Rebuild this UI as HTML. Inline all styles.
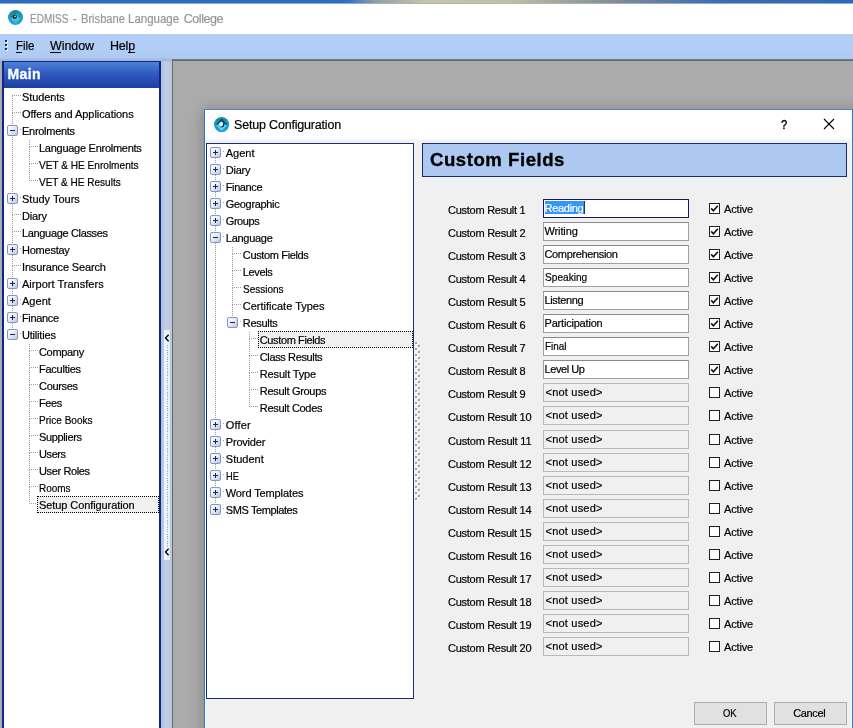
<!DOCTYPE html>
<html><head><meta charset="utf-8"><title>EDMISS - Brisbane Language College</title><style>html,body{margin:0;padding:0;background:#ababab;}
body{width:853px;height:728px;overflow:hidden;position:relative;font-family:"Liberation Sans", sans-serif;}
#r{position:absolute;left:0;top:0;width:853px;height:728px;overflow:hidden;}
#r div,#r span,#r svg{position:absolute;}
#t{left:0;top:0;width:853px;height:728px;will-change:transform;}
#r span{white-space:pre;line-height:normal;color:#000;font-size:11px;-webkit-text-stroke:0.2px currentColor;}
</style></head><body><div id="r"><div style="left:0px;top:0px;width:853px;height:4px;background:#fff"></div><div style="left:0px;top:0px;width:853px;height:3px;background:linear-gradient(90deg,#2a6cc2 0%,#2c6ec2 40.5%,#8fa0a8 44%,#c9c5a6 50%,#bfc0a4 60%,#98a29a 67%,#74889c 74%,#3a6eb6 84%,#2c68bc 100%)"></div><div style="left:0px;top:3px;width:853px;height:1px;background:linear-gradient(90deg,#264f8e 0%,#264f8e 40.5%,#5c6468 45%,#6e6c5c 60%,#565e66 72%,#2c4f86 84%,#2c4f86 100%);opacity:.5"></div><div style="left:0px;top:4px;width:853px;height:30px;background:#fff"></div><div style="left:0px;top:34px;width:853px;height:26px;background:linear-gradient(180deg,#b4cef6 0%,#b0ccf5 70%,#aec8f0 100%)"></div><div style="left:0px;top:60px;width:853px;height:668px;background:#a3b8da"></div><div style="left:0px;top:58px;width:172px;height:3px;background:linear-gradient(180deg,#aac2ea,#9fb2d2)"></div><div style="left:0px;top:61px;width:2px;height:667px;background:#a9adb4"></div><svg style="position:absolute;left:7.0px;top:8.8px" width="17.0" height="17.0" viewBox="-8.5 -8.5 17.0 17.0"><defs><linearGradient id="g1" x1="0" y1="0" x2="0" y2="1"><stop offset="0" stop-color="#12889f"/><stop offset="0.5" stop-color="#189ebd"/><stop offset="1" stop-color="#22a6dc"/></linearGradient></defs><circle cx="0" cy="0" r="7.5" fill="url(#g1)"/><path d="M-4.6 0.6 L0 4.8 L4.6 0.6" fill="none" stroke="#5fd8f4" stroke-width="1.1" opacity="0.75"/><path d="M-4.6 -0.2 L-0.4 -4.4 L3.8 -0.2" fill="none" stroke="#0c5f78" stroke-width="1" opacity="0.8"/><circle cx="-0.2" cy="-0.2" r="3.3" fill="#8fe2f2" opacity="0.55"/><circle cx="-0.8" cy="-0.8" r="2.3" fill="#1c2434"/><circle cx="-0.5" cy="-1.0" r="1.0" fill="#d9a8c0"/></svg><div style="left:5px;top:40px;width:2px;height:2px;background:#1a2a5a"></div><div style="left:6px;top:41px;width:2px;height:2px;background:#fff"></div><div style="left:5px;top:40px;width:2px;height:2px;background:#1a2a5a"></div><div style="left:5px;top:44px;width:2px;height:2px;background:#1a2a5a"></div><div style="left:6px;top:45px;width:2px;height:2px;background:#fff"></div><div style="left:5px;top:44px;width:2px;height:2px;background:#1a2a5a"></div><div style="left:5px;top:48px;width:2px;height:2px;background:#1a2a5a"></div><div style="left:6px;top:49px;width:2px;height:2px;background:#fff"></div><div style="left:5px;top:48px;width:2px;height:2px;background:#1a2a5a"></div><div style="left:16px;top:52px;width:6px;height:1px;background:#000"></div><div style="left:50px;top:52px;width:11px;height:1px;background:#000"></div><div style="left:128px;top:52px;width:7px;height:1px;background:#000"></div><div style="left:2px;top:61px;width:159px;height:667px;background:#0f2684"></div><div style="left:4px;top:62px;width:155px;height:26px;background:linear-gradient(180deg,#5080da 0%,#2e5ac2 45%,#1c3ea0 100%)"></div><div style="left:4px;top:88px;width:155px;height:640px;background:#fff"></div><div style="left:161px;top:61px;width:11px;height:667px;background:linear-gradient(90deg,#b2c0da 0%,#bfcde4 45%,#bac8de 100%)"></div><div style="left:164px;top:330px;width:6px;height:230px;background:linear-gradient(90deg,#f4f7fd,#dfe8f6)"></div><div style="left:167px;top:345px;width:1px;height:201px;background:repeating-linear-gradient(180deg,#86aade 0 1px,transparent 1px 2.33px)"></div><div style="left:168px;top:346px;width:1px;height:201px;background:repeating-linear-gradient(180deg,#ffffff 0 1px,transparent 1px 2.33px)"></div><svg style="position:absolute;left:163.3px;top:333.2px" width="8" height="10" viewBox="-4 -5 8 10"><path d="M1.6 -3.2 L-1.5 0 L1.6 3.2" fill="none" stroke="#000" stroke-width="1.35"/></svg><svg style="position:absolute;left:163.3px;top:547.4px" width="8" height="10" viewBox="-4 -5 8 10"><path d="M1.6 -3.2 L-1.5 0 L1.6 3.2" fill="none" stroke="#000" stroke-width="1.35"/></svg><div style="left:172px;top:60px;width:681px;height:668px;background:#ababab"></div><div style="left:172px;top:59px;width:681px;height:2px;background:linear-gradient(180deg,#7a8494,#5c626c)"></div><div style="left:172px;top:61px;width:1px;height:667px;background:#656b6b"></div><div style="left:12px;top:95px;width:9px;height:1px;background:repeating-linear-gradient(90deg,#9c9c9c 0 1px,transparent 1px 2px);background-position:0px 0;background-size:2px 1px;background-repeat:repeat-x"></div><div style="left:12px;top:112px;width:9px;height:1px;background:repeating-linear-gradient(90deg,#9c9c9c 0 1px,transparent 1px 2px);background-position:0px 0;background-size:2px 1px;background-repeat:repeat-x"></div><div style="left:12px;top:95px;width:1px;height:17px;background:repeating-linear-gradient(180deg,#9c9c9c 0 1px,transparent 1px 2px);background-position:0 1px;background-size:1px 2px;background-repeat:repeat-y"></div><div style="left:19px;top:129px;width:2px;height:1px;background:repeating-linear-gradient(90deg,#9c9c9c 0 1px,transparent 1px 2px);background-position:1px 0;background-size:2px 1px;background-repeat:repeat-x"></div><div style="left:12px;top:112px;width:1px;height:13px;background:repeating-linear-gradient(180deg,#9c9c9c 0 1px,transparent 1px 2px);background-position:0 1px;background-size:1px 2px;background-repeat:repeat-y"></div><div style="left:29px;top:146px;width:9px;height:1px;background:repeating-linear-gradient(90deg,#9c9c9c 0 1px,transparent 1px 2px);background-position:0px 0;background-size:2px 1px;background-repeat:repeat-x"></div><div style="left:29px;top:139px;width:1px;height:7px;background:repeating-linear-gradient(180deg,#9c9c9c 0 1px,transparent 1px 2px);background-position:0 1px;background-size:1px 2px;background-repeat:repeat-y"></div><div style="left:29px;top:163px;width:9px;height:1px;background:repeating-linear-gradient(90deg,#9c9c9c 0 1px,transparent 1px 2px);background-position:0px 0;background-size:2px 1px;background-repeat:repeat-x"></div><div style="left:29px;top:146px;width:1px;height:17px;background:repeating-linear-gradient(180deg,#9c9c9c 0 1px,transparent 1px 2px);background-position:0 1px;background-size:1px 2px;background-repeat:repeat-y"></div><div style="left:29px;top:180px;width:9px;height:1px;background:repeating-linear-gradient(90deg,#9c9c9c 0 1px,transparent 1px 2px);background-position:0px 0;background-size:2px 1px;background-repeat:repeat-x"></div><div style="left:29px;top:163px;width:1px;height:17px;background:repeating-linear-gradient(180deg,#9c9c9c 0 1px,transparent 1px 2px);background-position:0 1px;background-size:1px 2px;background-repeat:repeat-y"></div><div style="left:19px;top:197px;width:2px;height:1px;background:repeating-linear-gradient(90deg,#9c9c9c 0 1px,transparent 1px 2px);background-position:1px 0;background-size:2px 1px;background-repeat:repeat-x"></div><div style="left:12px;top:136px;width:1px;height:57px;background:repeating-linear-gradient(180deg,#9c9c9c 0 1px,transparent 1px 2px);background-position:0 1px;background-size:1px 2px;background-repeat:repeat-y"></div><div style="left:12px;top:214px;width:9px;height:1px;background:repeating-linear-gradient(90deg,#9c9c9c 0 1px,transparent 1px 2px);background-position:0px 0;background-size:2px 1px;background-repeat:repeat-x"></div><div style="left:12px;top:204px;width:1px;height:10px;background:repeating-linear-gradient(180deg,#9c9c9c 0 1px,transparent 1px 2px);background-position:0 0px;background-size:1px 2px;background-repeat:repeat-y"></div><div style="left:12px;top:231px;width:9px;height:1px;background:repeating-linear-gradient(90deg,#9c9c9c 0 1px,transparent 1px 2px);background-position:0px 0;background-size:2px 1px;background-repeat:repeat-x"></div><div style="left:12px;top:214px;width:1px;height:17px;background:repeating-linear-gradient(180deg,#9c9c9c 0 1px,transparent 1px 2px);background-position:0 1px;background-size:1px 2px;background-repeat:repeat-y"></div><div style="left:19px;top:248px;width:2px;height:1px;background:repeating-linear-gradient(90deg,#9c9c9c 0 1px,transparent 1px 2px);background-position:1px 0;background-size:2px 1px;background-repeat:repeat-x"></div><div style="left:12px;top:231px;width:1px;height:13px;background:repeating-linear-gradient(180deg,#9c9c9c 0 1px,transparent 1px 2px);background-position:0 1px;background-size:1px 2px;background-repeat:repeat-y"></div><div style="left:12px;top:265px;width:9px;height:1px;background:repeating-linear-gradient(90deg,#9c9c9c 0 1px,transparent 1px 2px);background-position:0px 0;background-size:2px 1px;background-repeat:repeat-x"></div><div style="left:12px;top:255px;width:1px;height:10px;background:repeating-linear-gradient(180deg,#9c9c9c 0 1px,transparent 1px 2px);background-position:0 0px;background-size:1px 2px;background-repeat:repeat-y"></div><div style="left:19px;top:282px;width:2px;height:1px;background:repeating-linear-gradient(90deg,#9c9c9c 0 1px,transparent 1px 2px);background-position:1px 0;background-size:2px 1px;background-repeat:repeat-x"></div><div style="left:12px;top:265px;width:1px;height:13px;background:repeating-linear-gradient(180deg,#9c9c9c 0 1px,transparent 1px 2px);background-position:0 1px;background-size:1px 2px;background-repeat:repeat-y"></div><div style="left:19px;top:299px;width:2px;height:1px;background:repeating-linear-gradient(90deg,#9c9c9c 0 1px,transparent 1px 2px);background-position:1px 0;background-size:2px 1px;background-repeat:repeat-x"></div><div style="left:12px;top:289px;width:1px;height:6px;background:repeating-linear-gradient(180deg,#9c9c9c 0 1px,transparent 1px 2px);background-position:0 0px;background-size:1px 2px;background-repeat:repeat-y"></div><div style="left:19px;top:316px;width:2px;height:1px;background:repeating-linear-gradient(90deg,#9c9c9c 0 1px,transparent 1px 2px);background-position:1px 0;background-size:2px 1px;background-repeat:repeat-x"></div><div style="left:12px;top:306px;width:1px;height:6px;background:repeating-linear-gradient(180deg,#9c9c9c 0 1px,transparent 1px 2px);background-position:0 0px;background-size:1px 2px;background-repeat:repeat-y"></div><div style="left:19px;top:333px;width:2px;height:1px;background:repeating-linear-gradient(90deg,#9c9c9c 0 1px,transparent 1px 2px);background-position:1px 0;background-size:2px 1px;background-repeat:repeat-x"></div><div style="left:12px;top:323px;width:1px;height:6px;background:repeating-linear-gradient(180deg,#9c9c9c 0 1px,transparent 1px 2px);background-position:0 0px;background-size:1px 2px;background-repeat:repeat-y"></div><div style="left:29px;top:350px;width:9px;height:1px;background:repeating-linear-gradient(90deg,#9c9c9c 0 1px,transparent 1px 2px);background-position:0px 0;background-size:2px 1px;background-repeat:repeat-x"></div><div style="left:29px;top:343px;width:1px;height:7px;background:repeating-linear-gradient(180deg,#9c9c9c 0 1px,transparent 1px 2px);background-position:0 1px;background-size:1px 2px;background-repeat:repeat-y"></div><div style="left:29px;top:367px;width:9px;height:1px;background:repeating-linear-gradient(90deg,#9c9c9c 0 1px,transparent 1px 2px);background-position:0px 0;background-size:2px 1px;background-repeat:repeat-x"></div><div style="left:29px;top:350px;width:1px;height:17px;background:repeating-linear-gradient(180deg,#9c9c9c 0 1px,transparent 1px 2px);background-position:0 1px;background-size:1px 2px;background-repeat:repeat-y"></div><div style="left:29px;top:384px;width:9px;height:1px;background:repeating-linear-gradient(90deg,#9c9c9c 0 1px,transparent 1px 2px);background-position:0px 0;background-size:2px 1px;background-repeat:repeat-x"></div><div style="left:29px;top:367px;width:1px;height:17px;background:repeating-linear-gradient(180deg,#9c9c9c 0 1px,transparent 1px 2px);background-position:0 1px;background-size:1px 2px;background-repeat:repeat-y"></div><div style="left:29px;top:401px;width:9px;height:1px;background:repeating-linear-gradient(90deg,#9c9c9c 0 1px,transparent 1px 2px);background-position:0px 0;background-size:2px 1px;background-repeat:repeat-x"></div><div style="left:29px;top:384px;width:1px;height:17px;background:repeating-linear-gradient(180deg,#9c9c9c 0 1px,transparent 1px 2px);background-position:0 1px;background-size:1px 2px;background-repeat:repeat-y"></div><div style="left:29px;top:418px;width:9px;height:1px;background:repeating-linear-gradient(90deg,#9c9c9c 0 1px,transparent 1px 2px);background-position:0px 0;background-size:2px 1px;background-repeat:repeat-x"></div><div style="left:29px;top:401px;width:1px;height:17px;background:repeating-linear-gradient(180deg,#9c9c9c 0 1px,transparent 1px 2px);background-position:0 1px;background-size:1px 2px;background-repeat:repeat-y"></div><div style="left:29px;top:435px;width:9px;height:1px;background:repeating-linear-gradient(90deg,#9c9c9c 0 1px,transparent 1px 2px);background-position:0px 0;background-size:2px 1px;background-repeat:repeat-x"></div><div style="left:29px;top:418px;width:1px;height:17px;background:repeating-linear-gradient(180deg,#9c9c9c 0 1px,transparent 1px 2px);background-position:0 1px;background-size:1px 2px;background-repeat:repeat-y"></div><div style="left:29px;top:452px;width:9px;height:1px;background:repeating-linear-gradient(90deg,#9c9c9c 0 1px,transparent 1px 2px);background-position:0px 0;background-size:2px 1px;background-repeat:repeat-x"></div><div style="left:29px;top:435px;width:1px;height:17px;background:repeating-linear-gradient(180deg,#9c9c9c 0 1px,transparent 1px 2px);background-position:0 1px;background-size:1px 2px;background-repeat:repeat-y"></div><div style="left:29px;top:469px;width:9px;height:1px;background:repeating-linear-gradient(90deg,#9c9c9c 0 1px,transparent 1px 2px);background-position:0px 0;background-size:2px 1px;background-repeat:repeat-x"></div><div style="left:29px;top:452px;width:1px;height:17px;background:repeating-linear-gradient(180deg,#9c9c9c 0 1px,transparent 1px 2px);background-position:0 1px;background-size:1px 2px;background-repeat:repeat-y"></div><div style="left:29px;top:486px;width:9px;height:1px;background:repeating-linear-gradient(90deg,#9c9c9c 0 1px,transparent 1px 2px);background-position:0px 0;background-size:2px 1px;background-repeat:repeat-x"></div><div style="left:29px;top:469px;width:1px;height:17px;background:repeating-linear-gradient(180deg,#9c9c9c 0 1px,transparent 1px 2px);background-position:0 1px;background-size:1px 2px;background-repeat:repeat-y"></div><div style="left:29px;top:503px;width:9px;height:1px;background:repeating-linear-gradient(90deg,#9c9c9c 0 1px,transparent 1px 2px);background-position:0px 0;background-size:2px 1px;background-repeat:repeat-x"></div><div style="left:37px;top:496px;width:122px;height:17px;background:#f0f0f0;border:1px dotted #000;box-sizing:border-box"></div><div style="left:29px;top:486px;width:1px;height:17px;background:repeating-linear-gradient(180deg,#9c9c9c 0 1px,transparent 1px 2px);background-position:0 1px;background-size:1px 2px;background-repeat:repeat-y"></div><div style="left:7px;top:125px;width:9px;height:9px;border:1px solid #8896b8;border-radius:2px;background:linear-gradient(135deg,#ffffff 0%,#eaf0fb 40%,#b9c9e8 100%)"></div><div style="left:10px;top:130px;width:5px;height:1px;background:#18245e"></div><div style="left:7px;top:193px;width:9px;height:9px;border:1px solid #8896b8;border-radius:2px;background:linear-gradient(135deg,#ffffff 0%,#eaf0fb 40%,#b9c9e8 100%)"></div><div style="left:10px;top:198px;width:5px;height:1px;background:#18245e"></div><div style="left:12px;top:196px;width:1px;height:5px;background:#18245e"></div><div style="left:7px;top:244px;width:9px;height:9px;border:1px solid #8896b8;border-radius:2px;background:linear-gradient(135deg,#ffffff 0%,#eaf0fb 40%,#b9c9e8 100%)"></div><div style="left:10px;top:249px;width:5px;height:1px;background:#18245e"></div><div style="left:12px;top:247px;width:1px;height:5px;background:#18245e"></div><div style="left:7px;top:278px;width:9px;height:9px;border:1px solid #8896b8;border-radius:2px;background:linear-gradient(135deg,#ffffff 0%,#eaf0fb 40%,#b9c9e8 100%)"></div><div style="left:10px;top:283px;width:5px;height:1px;background:#18245e"></div><div style="left:12px;top:281px;width:1px;height:5px;background:#18245e"></div><div style="left:7px;top:295px;width:9px;height:9px;border:1px solid #8896b8;border-radius:2px;background:linear-gradient(135deg,#ffffff 0%,#eaf0fb 40%,#b9c9e8 100%)"></div><div style="left:10px;top:300px;width:5px;height:1px;background:#18245e"></div><div style="left:12px;top:298px;width:1px;height:5px;background:#18245e"></div><div style="left:7px;top:312px;width:9px;height:9px;border:1px solid #8896b8;border-radius:2px;background:linear-gradient(135deg,#ffffff 0%,#eaf0fb 40%,#b9c9e8 100%)"></div><div style="left:10px;top:317px;width:5px;height:1px;background:#18245e"></div><div style="left:12px;top:315px;width:1px;height:5px;background:#18245e"></div><div style="left:7px;top:329px;width:9px;height:9px;border:1px solid #8896b8;border-radius:2px;background:linear-gradient(135deg,#ffffff 0%,#eaf0fb 40%,#b9c9e8 100%)"></div><div style="left:10px;top:334px;width:5px;height:1px;background:#18245e"></div><div style="left:204px;top:109px;width:660px;height:640px;background:#9a9a9a;box-shadow:0 1px 13px 1px rgba(0,0,0,0.22)"></div><div style="left:204px;top:109px;width:649px;height:630px;background:#4a86c6"></div><div style="left:204px;top:110px;width:649px;height:630px;background:#2b78d0"></div><div style="left:205px;top:110px;width:647px;height:630px;background:#f0f0f0;border-left:1px solid #fafcff;border-right:1px solid #fafcff;box-sizing:border-box"></div><div style="left:205px;top:110px;width:647px;height:28px;background:#fff"></div><div style="left:205px;top:138px;width:647px;height:3px;background:linear-gradient(180deg,#fff,#f0f0f0)"></div><svg style="position:absolute;left:212.70000000000002px;top:115.7px" width="17.2" height="17.2" viewBox="-8.6 -8.6 17.2 17.2"><defs><linearGradient id="g2" x1="0" y1="0" x2="0" y2="1"><stop offset="0" stop-color="#12889f"/><stop offset="0.5" stop-color="#189ebd"/><stop offset="1" stop-color="#22a6dc"/></linearGradient></defs><circle cx="0" cy="0" r="7.6" fill="url(#g2)"/><path d="M-4.9 0 L0 5 L4.9 0" fill="none" stroke="#74e4fa" stroke-width="1.3"/><path d="M-5 0 L0 -5 L5 0" fill="none" stroke="#142850" stroke-width="1.1"/><circle cx="-0.4" cy="-0.3" r="2.1" fill="#f4fbff"/><path d="M1.5 -1.6 A2.3 2.3 0 0 1 0.2 2.2" fill="none" stroke="#10203c" stroke-width="1.1"/></svg><svg style="position:absolute;left:823px;top:118px" width="12" height="12" viewBox="0 0 12 12"><path d="M1 1 L11 11 M11 1 L1 11" stroke="#000" stroke-width="1.1" fill="none"/></svg><div style="left:206px;top:143px;width:208px;height:556px;background:#fff;border:1px solid #1c2c74;box-sizing:border-box"></div><div style="left:222px;top:151px;width:2px;height:1px;background:repeating-linear-gradient(90deg,#9c9c9c 0 1px,transparent 1px 2px);background-position:1px 0;background-size:2px 1px;background-repeat:repeat-x"></div><div style="left:222px;top:168px;width:2px;height:1px;background:repeating-linear-gradient(90deg,#9c9c9c 0 1px,transparent 1px 2px);background-position:1px 0;background-size:2px 1px;background-repeat:repeat-x"></div><div style="left:215px;top:158px;width:1px;height:6px;background:repeating-linear-gradient(180deg,#9c9c9c 0 1px,transparent 1px 2px);background-position:0 0px;background-size:1px 2px;background-repeat:repeat-y"></div><div style="left:222px;top:185px;width:2px;height:1px;background:repeating-linear-gradient(90deg,#9c9c9c 0 1px,transparent 1px 2px);background-position:1px 0;background-size:2px 1px;background-repeat:repeat-x"></div><div style="left:215px;top:175px;width:1px;height:6px;background:repeating-linear-gradient(180deg,#9c9c9c 0 1px,transparent 1px 2px);background-position:0 0px;background-size:1px 2px;background-repeat:repeat-y"></div><div style="left:222px;top:202px;width:2px;height:1px;background:repeating-linear-gradient(90deg,#9c9c9c 0 1px,transparent 1px 2px);background-position:1px 0;background-size:2px 1px;background-repeat:repeat-x"></div><div style="left:215px;top:192px;width:1px;height:6px;background:repeating-linear-gradient(180deg,#9c9c9c 0 1px,transparent 1px 2px);background-position:0 0px;background-size:1px 2px;background-repeat:repeat-y"></div><div style="left:222px;top:219px;width:2px;height:1px;background:repeating-linear-gradient(90deg,#9c9c9c 0 1px,transparent 1px 2px);background-position:1px 0;background-size:2px 1px;background-repeat:repeat-x"></div><div style="left:215px;top:209px;width:1px;height:6px;background:repeating-linear-gradient(180deg,#9c9c9c 0 1px,transparent 1px 2px);background-position:0 0px;background-size:1px 2px;background-repeat:repeat-y"></div><div style="left:222px;top:236px;width:2px;height:1px;background:repeating-linear-gradient(90deg,#9c9c9c 0 1px,transparent 1px 2px);background-position:1px 0;background-size:2px 1px;background-repeat:repeat-x"></div><div style="left:215px;top:226px;width:1px;height:6px;background:repeating-linear-gradient(180deg,#9c9c9c 0 1px,transparent 1px 2px);background-position:0 0px;background-size:1px 2px;background-repeat:repeat-y"></div><div style="left:232px;top:253px;width:9px;height:1px;background:repeating-linear-gradient(90deg,#9c9c9c 0 1px,transparent 1px 2px);background-position:0px 0;background-size:2px 1px;background-repeat:repeat-x"></div><div style="left:232px;top:246px;width:1px;height:7px;background:repeating-linear-gradient(180deg,#9c9c9c 0 1px,transparent 1px 2px);background-position:0 1px;background-size:1px 2px;background-repeat:repeat-y"></div><div style="left:232px;top:270px;width:9px;height:1px;background:repeating-linear-gradient(90deg,#9c9c9c 0 1px,transparent 1px 2px);background-position:0px 0;background-size:2px 1px;background-repeat:repeat-x"></div><div style="left:232px;top:253px;width:1px;height:17px;background:repeating-linear-gradient(180deg,#9c9c9c 0 1px,transparent 1px 2px);background-position:0 1px;background-size:1px 2px;background-repeat:repeat-y"></div><div style="left:232px;top:287px;width:9px;height:1px;background:repeating-linear-gradient(90deg,#9c9c9c 0 1px,transparent 1px 2px);background-position:0px 0;background-size:2px 1px;background-repeat:repeat-x"></div><div style="left:232px;top:270px;width:1px;height:17px;background:repeating-linear-gradient(180deg,#9c9c9c 0 1px,transparent 1px 2px);background-position:0 1px;background-size:1px 2px;background-repeat:repeat-y"></div><div style="left:232px;top:304px;width:9px;height:1px;background:repeating-linear-gradient(90deg,#9c9c9c 0 1px,transparent 1px 2px);background-position:0px 0;background-size:2px 1px;background-repeat:repeat-x"></div><div style="left:232px;top:287px;width:1px;height:17px;background:repeating-linear-gradient(180deg,#9c9c9c 0 1px,transparent 1px 2px);background-position:0 1px;background-size:1px 2px;background-repeat:repeat-y"></div><div style="left:239px;top:321px;width:2px;height:1px;background:repeating-linear-gradient(90deg,#9c9c9c 0 1px,transparent 1px 2px);background-position:1px 0;background-size:2px 1px;background-repeat:repeat-x"></div><div style="left:232px;top:304px;width:1px;height:13px;background:repeating-linear-gradient(180deg,#9c9c9c 0 1px,transparent 1px 2px);background-position:0 1px;background-size:1px 2px;background-repeat:repeat-y"></div><div style="left:249px;top:338px;width:9px;height:1px;background:repeating-linear-gradient(90deg,#9c9c9c 0 1px,transparent 1px 2px);background-position:0px 0;background-size:2px 1px;background-repeat:repeat-x"></div><div style="left:257.8px;top:331px;width:155.2px;height:17px;background:#f0f0f0;border:1px dotted #000;box-sizing:border-box"></div><div style="left:249px;top:331px;width:1px;height:7px;background:repeating-linear-gradient(180deg,#9c9c9c 0 1px,transparent 1px 2px);background-position:0 1px;background-size:1px 2px;background-repeat:repeat-y"></div><div style="left:249px;top:355px;width:9px;height:1px;background:repeating-linear-gradient(90deg,#9c9c9c 0 1px,transparent 1px 2px);background-position:0px 0;background-size:2px 1px;background-repeat:repeat-x"></div><div style="left:249px;top:338px;width:1px;height:17px;background:repeating-linear-gradient(180deg,#9c9c9c 0 1px,transparent 1px 2px);background-position:0 1px;background-size:1px 2px;background-repeat:repeat-y"></div><div style="left:249px;top:372px;width:9px;height:1px;background:repeating-linear-gradient(90deg,#9c9c9c 0 1px,transparent 1px 2px);background-position:0px 0;background-size:2px 1px;background-repeat:repeat-x"></div><div style="left:249px;top:355px;width:1px;height:17px;background:repeating-linear-gradient(180deg,#9c9c9c 0 1px,transparent 1px 2px);background-position:0 1px;background-size:1px 2px;background-repeat:repeat-y"></div><div style="left:249px;top:389px;width:9px;height:1px;background:repeating-linear-gradient(90deg,#9c9c9c 0 1px,transparent 1px 2px);background-position:0px 0;background-size:2px 1px;background-repeat:repeat-x"></div><div style="left:249px;top:372px;width:1px;height:17px;background:repeating-linear-gradient(180deg,#9c9c9c 0 1px,transparent 1px 2px);background-position:0 1px;background-size:1px 2px;background-repeat:repeat-y"></div><div style="left:249px;top:406px;width:9px;height:1px;background:repeating-linear-gradient(90deg,#9c9c9c 0 1px,transparent 1px 2px);background-position:0px 0;background-size:2px 1px;background-repeat:repeat-x"></div><div style="left:249px;top:389px;width:1px;height:17px;background:repeating-linear-gradient(180deg,#9c9c9c 0 1px,transparent 1px 2px);background-position:0 1px;background-size:1px 2px;background-repeat:repeat-y"></div><div style="left:222px;top:423px;width:2px;height:1px;background:repeating-linear-gradient(90deg,#9c9c9c 0 1px,transparent 1px 2px);background-position:1px 0;background-size:2px 1px;background-repeat:repeat-x"></div><div style="left:215px;top:243px;width:1px;height:176px;background:repeating-linear-gradient(180deg,#9c9c9c 0 1px,transparent 1px 2px);background-position:0 0px;background-size:1px 2px;background-repeat:repeat-y"></div><div style="left:222px;top:440px;width:2px;height:1px;background:repeating-linear-gradient(90deg,#9c9c9c 0 1px,transparent 1px 2px);background-position:1px 0;background-size:2px 1px;background-repeat:repeat-x"></div><div style="left:215px;top:430px;width:1px;height:6px;background:repeating-linear-gradient(180deg,#9c9c9c 0 1px,transparent 1px 2px);background-position:0 0px;background-size:1px 2px;background-repeat:repeat-y"></div><div style="left:222px;top:457px;width:2px;height:1px;background:repeating-linear-gradient(90deg,#9c9c9c 0 1px,transparent 1px 2px);background-position:1px 0;background-size:2px 1px;background-repeat:repeat-x"></div><div style="left:215px;top:447px;width:1px;height:6px;background:repeating-linear-gradient(180deg,#9c9c9c 0 1px,transparent 1px 2px);background-position:0 0px;background-size:1px 2px;background-repeat:repeat-y"></div><div style="left:222px;top:474px;width:2px;height:1px;background:repeating-linear-gradient(90deg,#9c9c9c 0 1px,transparent 1px 2px);background-position:1px 0;background-size:2px 1px;background-repeat:repeat-x"></div><div style="left:215px;top:464px;width:1px;height:6px;background:repeating-linear-gradient(180deg,#9c9c9c 0 1px,transparent 1px 2px);background-position:0 0px;background-size:1px 2px;background-repeat:repeat-y"></div><div style="left:222px;top:491px;width:2px;height:1px;background:repeating-linear-gradient(90deg,#9c9c9c 0 1px,transparent 1px 2px);background-position:1px 0;background-size:2px 1px;background-repeat:repeat-x"></div><div style="left:215px;top:481px;width:1px;height:6px;background:repeating-linear-gradient(180deg,#9c9c9c 0 1px,transparent 1px 2px);background-position:0 0px;background-size:1px 2px;background-repeat:repeat-y"></div><div style="left:222px;top:508px;width:2px;height:1px;background:repeating-linear-gradient(90deg,#9c9c9c 0 1px,transparent 1px 2px);background-position:1px 0;background-size:2px 1px;background-repeat:repeat-x"></div><div style="left:215px;top:498px;width:1px;height:6px;background:repeating-linear-gradient(180deg,#9c9c9c 0 1px,transparent 1px 2px);background-position:0 0px;background-size:1px 2px;background-repeat:repeat-y"></div><div style="left:210px;top:147px;width:9px;height:9px;border:1px solid #8896b8;border-radius:2px;background:linear-gradient(135deg,#ffffff 0%,#eaf0fb 40%,#b9c9e8 100%)"></div><div style="left:213px;top:152px;width:5px;height:1px;background:#18245e"></div><div style="left:215px;top:150px;width:1px;height:5px;background:#18245e"></div><div style="left:210px;top:164px;width:9px;height:9px;border:1px solid #8896b8;border-radius:2px;background:linear-gradient(135deg,#ffffff 0%,#eaf0fb 40%,#b9c9e8 100%)"></div><div style="left:213px;top:169px;width:5px;height:1px;background:#18245e"></div><div style="left:215px;top:167px;width:1px;height:5px;background:#18245e"></div><div style="left:210px;top:181px;width:9px;height:9px;border:1px solid #8896b8;border-radius:2px;background:linear-gradient(135deg,#ffffff 0%,#eaf0fb 40%,#b9c9e8 100%)"></div><div style="left:213px;top:186px;width:5px;height:1px;background:#18245e"></div><div style="left:215px;top:184px;width:1px;height:5px;background:#18245e"></div><div style="left:210px;top:198px;width:9px;height:9px;border:1px solid #8896b8;border-radius:2px;background:linear-gradient(135deg,#ffffff 0%,#eaf0fb 40%,#b9c9e8 100%)"></div><div style="left:213px;top:203px;width:5px;height:1px;background:#18245e"></div><div style="left:215px;top:201px;width:1px;height:5px;background:#18245e"></div><div style="left:210px;top:215px;width:9px;height:9px;border:1px solid #8896b8;border-radius:2px;background:linear-gradient(135deg,#ffffff 0%,#eaf0fb 40%,#b9c9e8 100%)"></div><div style="left:213px;top:220px;width:5px;height:1px;background:#18245e"></div><div style="left:215px;top:218px;width:1px;height:5px;background:#18245e"></div><div style="left:210px;top:232px;width:9px;height:9px;border:1px solid #8896b8;border-radius:2px;background:linear-gradient(135deg,#ffffff 0%,#eaf0fb 40%,#b9c9e8 100%)"></div><div style="left:213px;top:237px;width:5px;height:1px;background:#18245e"></div><div style="left:227px;top:317px;width:9px;height:9px;border:1px solid #8896b8;border-radius:2px;background:linear-gradient(135deg,#ffffff 0%,#eaf0fb 40%,#b9c9e8 100%)"></div><div style="left:230px;top:322px;width:5px;height:1px;background:#18245e"></div><div style="left:210px;top:419px;width:9px;height:9px;border:1px solid #8896b8;border-radius:2px;background:linear-gradient(135deg,#ffffff 0%,#eaf0fb 40%,#b9c9e8 100%)"></div><div style="left:213px;top:424px;width:5px;height:1px;background:#18245e"></div><div style="left:215px;top:422px;width:1px;height:5px;background:#18245e"></div><div style="left:210px;top:436px;width:9px;height:9px;border:1px solid #8896b8;border-radius:2px;background:linear-gradient(135deg,#ffffff 0%,#eaf0fb 40%,#b9c9e8 100%)"></div><div style="left:213px;top:441px;width:5px;height:1px;background:#18245e"></div><div style="left:215px;top:439px;width:1px;height:5px;background:#18245e"></div><div style="left:210px;top:453px;width:9px;height:9px;border:1px solid #8896b8;border-radius:2px;background:linear-gradient(135deg,#ffffff 0%,#eaf0fb 40%,#b9c9e8 100%)"></div><div style="left:213px;top:458px;width:5px;height:1px;background:#18245e"></div><div style="left:215px;top:456px;width:1px;height:5px;background:#18245e"></div><div style="left:210px;top:470px;width:9px;height:9px;border:1px solid #8896b8;border-radius:2px;background:linear-gradient(135deg,#ffffff 0%,#eaf0fb 40%,#b9c9e8 100%)"></div><div style="left:213px;top:475px;width:5px;height:1px;background:#18245e"></div><div style="left:215px;top:473px;width:1px;height:5px;background:#18245e"></div><div style="left:210px;top:487px;width:9px;height:9px;border:1px solid #8896b8;border-radius:2px;background:linear-gradient(135deg,#ffffff 0%,#eaf0fb 40%,#b9c9e8 100%)"></div><div style="left:213px;top:492px;width:5px;height:1px;background:#18245e"></div><div style="left:215px;top:490px;width:1px;height:5px;background:#18245e"></div><div style="left:210px;top:504px;width:9px;height:9px;border:1px solid #8896b8;border-radius:2px;background:linear-gradient(135deg,#ffffff 0%,#eaf0fb 40%,#b9c9e8 100%)"></div><div style="left:213px;top:509px;width:5px;height:1px;background:#18245e"></div><div style="left:215px;top:507px;width:1px;height:5px;background:#18245e"></div><div style="left:416px;top:343px;width:2px;height:2px;background:#fafafa"></div><div style="left:415px;top:342px;width:2px;height:2px;background:#a4a4a4"></div><div style="left:416px;top:349px;width:2px;height:2px;background:#fafafa"></div><div style="left:415px;top:348px;width:2px;height:2px;background:#a4a4a4"></div><div style="left:416px;top:355px;width:2px;height:2px;background:#fafafa"></div><div style="left:415px;top:354px;width:2px;height:2px;background:#a4a4a4"></div><div style="left:416px;top:361px;width:2px;height:2px;background:#fafafa"></div><div style="left:415px;top:360px;width:2px;height:2px;background:#a4a4a4"></div><div style="left:416px;top:367px;width:2px;height:2px;background:#fafafa"></div><div style="left:415px;top:366px;width:2px;height:2px;background:#a4a4a4"></div><div style="left:416px;top:373px;width:2px;height:2px;background:#fafafa"></div><div style="left:415px;top:372px;width:2px;height:2px;background:#a4a4a4"></div><div style="left:416px;top:379px;width:2px;height:2px;background:#fafafa"></div><div style="left:415px;top:378px;width:2px;height:2px;background:#a4a4a4"></div><div style="left:416px;top:385px;width:2px;height:2px;background:#fafafa"></div><div style="left:415px;top:384px;width:2px;height:2px;background:#a4a4a4"></div><div style="left:416px;top:391px;width:2px;height:2px;background:#fafafa"></div><div style="left:415px;top:390px;width:2px;height:2px;background:#a4a4a4"></div><div style="left:416px;top:397px;width:2px;height:2px;background:#fafafa"></div><div style="left:415px;top:396px;width:2px;height:2px;background:#a4a4a4"></div><div style="left:416px;top:403px;width:2px;height:2px;background:#fafafa"></div><div style="left:415px;top:402px;width:2px;height:2px;background:#a4a4a4"></div><div style="left:416px;top:409px;width:2px;height:2px;background:#fafafa"></div><div style="left:415px;top:408px;width:2px;height:2px;background:#a4a4a4"></div><div style="left:416px;top:415px;width:2px;height:2px;background:#fafafa"></div><div style="left:415px;top:414px;width:2px;height:2px;background:#a4a4a4"></div><div style="left:416px;top:421px;width:2px;height:2px;background:#fafafa"></div><div style="left:415px;top:420px;width:2px;height:2px;background:#a4a4a4"></div><div style="left:416px;top:427px;width:2px;height:2px;background:#fafafa"></div><div style="left:415px;top:426px;width:2px;height:2px;background:#a4a4a4"></div><div style="left:416px;top:433px;width:2px;height:2px;background:#fafafa"></div><div style="left:415px;top:432px;width:2px;height:2px;background:#a4a4a4"></div><div style="left:416px;top:439px;width:2px;height:2px;background:#fafafa"></div><div style="left:415px;top:438px;width:2px;height:2px;background:#a4a4a4"></div><div style="left:416px;top:445px;width:2px;height:2px;background:#fafafa"></div><div style="left:415px;top:444px;width:2px;height:2px;background:#a4a4a4"></div><div style="left:416px;top:451px;width:2px;height:2px;background:#fafafa"></div><div style="left:415px;top:450px;width:2px;height:2px;background:#a4a4a4"></div><div style="left:416px;top:457px;width:2px;height:2px;background:#fafafa"></div><div style="left:415px;top:456px;width:2px;height:2px;background:#a4a4a4"></div><div style="left:416px;top:463px;width:2px;height:2px;background:#fafafa"></div><div style="left:415px;top:462px;width:2px;height:2px;background:#a4a4a4"></div><div style="left:416px;top:469px;width:2px;height:2px;background:#fafafa"></div><div style="left:415px;top:468px;width:2px;height:2px;background:#a4a4a4"></div><div style="left:416px;top:475px;width:2px;height:2px;background:#fafafa"></div><div style="left:415px;top:474px;width:2px;height:2px;background:#a4a4a4"></div><div style="left:416px;top:481px;width:2px;height:2px;background:#fafafa"></div><div style="left:415px;top:480px;width:2px;height:2px;background:#a4a4a4"></div><div style="left:416px;top:487px;width:2px;height:2px;background:#fafafa"></div><div style="left:415px;top:486px;width:2px;height:2px;background:#a4a4a4"></div><div style="left:416px;top:493px;width:2px;height:2px;background:#fafafa"></div><div style="left:415px;top:492px;width:2px;height:2px;background:#a4a4a4"></div><div style="left:416px;top:499px;width:2px;height:2px;background:#fafafa"></div><div style="left:415px;top:498px;width:2px;height:2px;background:#a4a4a4"></div><div style="left:419px;top:346px;width:2px;height:2px;background:#fafafa"></div><div style="left:418px;top:345px;width:2px;height:2px;background:#a4a4a4"></div><div style="left:419px;top:352px;width:2px;height:2px;background:#fafafa"></div><div style="left:418px;top:351px;width:2px;height:2px;background:#a4a4a4"></div><div style="left:419px;top:358px;width:2px;height:2px;background:#fafafa"></div><div style="left:418px;top:357px;width:2px;height:2px;background:#a4a4a4"></div><div style="left:419px;top:364px;width:2px;height:2px;background:#fafafa"></div><div style="left:418px;top:363px;width:2px;height:2px;background:#a4a4a4"></div><div style="left:419px;top:370px;width:2px;height:2px;background:#fafafa"></div><div style="left:418px;top:369px;width:2px;height:2px;background:#a4a4a4"></div><div style="left:419px;top:376px;width:2px;height:2px;background:#fafafa"></div><div style="left:418px;top:375px;width:2px;height:2px;background:#a4a4a4"></div><div style="left:419px;top:382px;width:2px;height:2px;background:#fafafa"></div><div style="left:418px;top:381px;width:2px;height:2px;background:#a4a4a4"></div><div style="left:419px;top:388px;width:2px;height:2px;background:#fafafa"></div><div style="left:418px;top:387px;width:2px;height:2px;background:#a4a4a4"></div><div style="left:419px;top:394px;width:2px;height:2px;background:#fafafa"></div><div style="left:418px;top:393px;width:2px;height:2px;background:#a4a4a4"></div><div style="left:419px;top:400px;width:2px;height:2px;background:#fafafa"></div><div style="left:418px;top:399px;width:2px;height:2px;background:#a4a4a4"></div><div style="left:419px;top:406px;width:2px;height:2px;background:#fafafa"></div><div style="left:418px;top:405px;width:2px;height:2px;background:#a4a4a4"></div><div style="left:419px;top:412px;width:2px;height:2px;background:#fafafa"></div><div style="left:418px;top:411px;width:2px;height:2px;background:#a4a4a4"></div><div style="left:419px;top:418px;width:2px;height:2px;background:#fafafa"></div><div style="left:418px;top:417px;width:2px;height:2px;background:#a4a4a4"></div><div style="left:419px;top:424px;width:2px;height:2px;background:#fafafa"></div><div style="left:418px;top:423px;width:2px;height:2px;background:#a4a4a4"></div><div style="left:419px;top:430px;width:2px;height:2px;background:#fafafa"></div><div style="left:418px;top:429px;width:2px;height:2px;background:#a4a4a4"></div><div style="left:419px;top:436px;width:2px;height:2px;background:#fafafa"></div><div style="left:418px;top:435px;width:2px;height:2px;background:#a4a4a4"></div><div style="left:419px;top:442px;width:2px;height:2px;background:#fafafa"></div><div style="left:418px;top:441px;width:2px;height:2px;background:#a4a4a4"></div><div style="left:419px;top:448px;width:2px;height:2px;background:#fafafa"></div><div style="left:418px;top:447px;width:2px;height:2px;background:#a4a4a4"></div><div style="left:419px;top:454px;width:2px;height:2px;background:#fafafa"></div><div style="left:418px;top:453px;width:2px;height:2px;background:#a4a4a4"></div><div style="left:419px;top:460px;width:2px;height:2px;background:#fafafa"></div><div style="left:418px;top:459px;width:2px;height:2px;background:#a4a4a4"></div><div style="left:419px;top:466px;width:2px;height:2px;background:#fafafa"></div><div style="left:418px;top:465px;width:2px;height:2px;background:#a4a4a4"></div><div style="left:419px;top:472px;width:2px;height:2px;background:#fafafa"></div><div style="left:418px;top:471px;width:2px;height:2px;background:#a4a4a4"></div><div style="left:419px;top:478px;width:2px;height:2px;background:#fafafa"></div><div style="left:418px;top:477px;width:2px;height:2px;background:#a4a4a4"></div><div style="left:419px;top:484px;width:2px;height:2px;background:#fafafa"></div><div style="left:418px;top:483px;width:2px;height:2px;background:#a4a4a4"></div><div style="left:419px;top:490px;width:2px;height:2px;background:#fafafa"></div><div style="left:418px;top:489px;width:2px;height:2px;background:#a4a4a4"></div><div style="left:419px;top:496px;width:2px;height:2px;background:#fafafa"></div><div style="left:418px;top:495px;width:2px;height:2px;background:#a4a4a4"></div><div style="left:422px;top:143px;width:425px;height:34px;background:#aec9f1;border:1px solid #1c2c74;box-sizing:border-box"></div><div style="left:543px;top:199px;width:146px;height:19px;background:#fff;border:1px solid #16165e;box-sizing:border-box"></div><div style="left:545px;top:201px;width:39px;height:13px;background:#3496fa"></div><div style="left:584px;top:201px;width:1px;height:13px;background:#333"></div><div style="left:709px;top:203px;width:11px;height:11px;background:#fff;border:1px solid #222;box-sizing:border-box"></div><svg style="position:absolute;left:709px;top:203px" width="11" height="11" viewBox="0 0 11 11"><path d="M2.2 5.4 L4.4 7.8 L8.8 2.8" fill="none" stroke="#111" stroke-width="1.6"/></svg><div style="left:543px;top:222px;width:146px;height:19px;background:#fff;border:1px solid #a0a0a0;border-top-color:#8a8a8a;box-sizing:border-box"></div><div style="left:709px;top:226px;width:11px;height:11px;background:#fff;border:1px solid #222;box-sizing:border-box"></div><svg style="position:absolute;left:709px;top:226px" width="11" height="11" viewBox="0 0 11 11"><path d="M2.2 5.4 L4.4 7.8 L8.8 2.8" fill="none" stroke="#111" stroke-width="1.6"/></svg><div style="left:543px;top:245px;width:146px;height:19px;background:#fff;border:1px solid #a0a0a0;border-top-color:#8a8a8a;box-sizing:border-box"></div><div style="left:709px;top:249px;width:11px;height:11px;background:#fff;border:1px solid #222;box-sizing:border-box"></div><svg style="position:absolute;left:709px;top:249px" width="11" height="11" viewBox="0 0 11 11"><path d="M2.2 5.4 L4.4 7.8 L8.8 2.8" fill="none" stroke="#111" stroke-width="1.6"/></svg><div style="left:543px;top:268px;width:146px;height:19px;background:#fff;border:1px solid #a0a0a0;border-top-color:#8a8a8a;box-sizing:border-box"></div><div style="left:709px;top:272px;width:11px;height:11px;background:#fff;border:1px solid #222;box-sizing:border-box"></div><svg style="position:absolute;left:709px;top:272px" width="11" height="11" viewBox="0 0 11 11"><path d="M2.2 5.4 L4.4 7.8 L8.8 2.8" fill="none" stroke="#111" stroke-width="1.6"/></svg><div style="left:543px;top:291px;width:146px;height:19px;background:#fff;border:1px solid #a0a0a0;border-top-color:#8a8a8a;box-sizing:border-box"></div><div style="left:709px;top:295px;width:11px;height:11px;background:#fff;border:1px solid #222;box-sizing:border-box"></div><svg style="position:absolute;left:709px;top:295px" width="11" height="11" viewBox="0 0 11 11"><path d="M2.2 5.4 L4.4 7.8 L8.8 2.8" fill="none" stroke="#111" stroke-width="1.6"/></svg><div style="left:543px;top:314px;width:146px;height:19px;background:#fff;border:1px solid #a0a0a0;border-top-color:#8a8a8a;box-sizing:border-box"></div><div style="left:709px;top:318px;width:11px;height:11px;background:#fff;border:1px solid #222;box-sizing:border-box"></div><svg style="position:absolute;left:709px;top:318px" width="11" height="11" viewBox="0 0 11 11"><path d="M2.2 5.4 L4.4 7.8 L8.8 2.8" fill="none" stroke="#111" stroke-width="1.6"/></svg><div style="left:543px;top:337px;width:146px;height:19px;background:#fff;border:1px solid #a0a0a0;border-top-color:#8a8a8a;box-sizing:border-box"></div><div style="left:709px;top:341px;width:11px;height:11px;background:#fff;border:1px solid #222;box-sizing:border-box"></div><svg style="position:absolute;left:709px;top:341px" width="11" height="11" viewBox="0 0 11 11"><path d="M2.2 5.4 L4.4 7.8 L8.8 2.8" fill="none" stroke="#111" stroke-width="1.6"/></svg><div style="left:543px;top:360px;width:146px;height:19px;background:#fff;border:1px solid #a0a0a0;border-top-color:#8a8a8a;box-sizing:border-box"></div><div style="left:709px;top:364px;width:11px;height:11px;background:#fff;border:1px solid #222;box-sizing:border-box"></div><svg style="position:absolute;left:709px;top:364px" width="11" height="11" viewBox="0 0 11 11"><path d="M2.2 5.4 L4.4 7.8 L8.8 2.8" fill="none" stroke="#111" stroke-width="1.6"/></svg><div style="left:543px;top:383px;width:146px;height:19px;background:#f0f0f0;border:1px solid #b8b8b8;box-sizing:border-box"></div><div style="left:709px;top:387px;width:11px;height:11px;background:#fff;border:1px solid #222;box-sizing:border-box"></div><div style="left:543px;top:406px;width:146px;height:19px;background:#f0f0f0;border:1px solid #b8b8b8;box-sizing:border-box"></div><div style="left:709px;top:410px;width:11px;height:11px;background:#fff;border:1px solid #222;box-sizing:border-box"></div><div style="left:543px;top:430px;width:146px;height:19px;background:#f0f0f0;border:1px solid #b8b8b8;box-sizing:border-box"></div><div style="left:709px;top:434px;width:11px;height:11px;background:#fff;border:1px solid #222;box-sizing:border-box"></div><div style="left:543px;top:453px;width:146px;height:19px;background:#f0f0f0;border:1px solid #b8b8b8;box-sizing:border-box"></div><div style="left:709px;top:457px;width:11px;height:11px;background:#fff;border:1px solid #222;box-sizing:border-box"></div><div style="left:543px;top:476px;width:146px;height:19px;background:#f0f0f0;border:1px solid #b8b8b8;box-sizing:border-box"></div><div style="left:709px;top:480px;width:11px;height:11px;background:#fff;border:1px solid #222;box-sizing:border-box"></div><div style="left:543px;top:499px;width:146px;height:19px;background:#f0f0f0;border:1px solid #b8b8b8;box-sizing:border-box"></div><div style="left:709px;top:503px;width:11px;height:11px;background:#fff;border:1px solid #222;box-sizing:border-box"></div><div style="left:543px;top:522px;width:146px;height:19px;background:#f0f0f0;border:1px solid #b8b8b8;box-sizing:border-box"></div><div style="left:709px;top:526px;width:11px;height:11px;background:#fff;border:1px solid #222;box-sizing:border-box"></div><div style="left:543px;top:545px;width:146px;height:19px;background:#f0f0f0;border:1px solid #b8b8b8;box-sizing:border-box"></div><div style="left:709px;top:549px;width:11px;height:11px;background:#fff;border:1px solid #222;box-sizing:border-box"></div><div style="left:543px;top:568px;width:146px;height:19px;background:#f0f0f0;border:1px solid #b8b8b8;box-sizing:border-box"></div><div style="left:709px;top:572px;width:11px;height:11px;background:#fff;border:1px solid #222;box-sizing:border-box"></div><div style="left:543px;top:591px;width:146px;height:19px;background:#f0f0f0;border:1px solid #b8b8b8;box-sizing:border-box"></div><div style="left:709px;top:595px;width:11px;height:11px;background:#fff;border:1px solid #222;box-sizing:border-box"></div><div style="left:543px;top:614px;width:146px;height:19px;background:#f0f0f0;border:1px solid #b8b8b8;box-sizing:border-box"></div><div style="left:709px;top:618px;width:11px;height:11px;background:#fff;border:1px solid #222;box-sizing:border-box"></div><div style="left:543px;top:637px;width:146px;height:19px;background:#f0f0f0;border:1px solid #b8b8b8;box-sizing:border-box"></div><div style="left:709px;top:641px;width:11px;height:11px;background:#fff;border:1px solid #222;box-sizing:border-box"></div><div style="left:694px;top:702px;width:73px;height:23px;background:#e1e1e1;border:1px solid #adadad;box-sizing:border-box"></div><div style="left:774px;top:702px;width:73px;height:23px;background:#e1e1e1;border:1px solid #adadad;box-sizing:border-box"></div><div id="t"><span style="left:30px;top:11.69px;font-size:12.5px;color:#969696;transform:scaleX(0.8031);transform-origin:0 0;">EDMISS</span><span style="left:72.9px;top:11.69px;font-size:12.5px;color:#969696;transform:scaleX(0.8629);transform-origin:0 0;">-</span><span style="left:80.6px;top:11.69px;font-size:12.5px;color:#969696;transform:scaleX(0.8897);transform-origin:0 0;">Brisbane</span><span style="left:128.3px;top:11.69px;font-size:12.5px;color:#969696;transform:scaleX(0.9187);transform-origin:0 0;">Language</span><span style="left:183.8px;top:11.69px;font-size:12.5px;color:#969696;letter-spacing:-0.456px;">College</span><span style="left:16px;top:39.19px;font-size:12.5px;transform:scaleX(0.9178);transform-origin:0 0;">File</span><span style="left:50px;top:39.19px;font-size:12.5px;letter-spacing:-0.078px;">Window</span><span style="left:110px;top:39.19px;font-size:12.5px;letter-spacing:-0.180px;">Help</span><span style="left:7.5px;top:65.83px;font-size:14px;font-weight:bold;color:#fff;letter-spacing:0.427px;-webkit-text-stroke:0.3px #fff;">Main</span><span style="left:22px;top:90.84px;font-size:11px;letter-spacing:-0.090px;">Students</span><span style="left:22px;top:107.84px;font-size:11px;letter-spacing:-0.057px;">Offers and Applications</span><span style="left:22px;top:124.85px;font-size:11px;letter-spacing:-0.284px;">Enrolments</span><span style="left:39px;top:141.84px;font-size:11px;letter-spacing:-0.265px;">Language Enrolments</span><span style="left:39px;top:158.84px;font-size:11px;transform:scaleX(0.9169);transform-origin:0 0;">VET &amp; HE Enrolments</span><span style="left:39px;top:175.84px;font-size:11px;transform:scaleX(0.9111);transform-origin:0 0;">VET &amp; HE Results</span><span style="left:22px;top:192.84px;font-size:11px;letter-spacing:-0.008px;">Study Tours</span><span style="left:22px;top:209.84px;font-size:11px;letter-spacing:-0.194px;">Diary</span><span style="left:22px;top:226.84px;font-size:11px;letter-spacing:-0.339px;">Language Classes</span><span style="left:22px;top:243.84px;font-size:11px;letter-spacing:-0.241px;">Homestay</span><span style="left:22px;top:260.85px;font-size:11px;letter-spacing:-0.157px;">Insurance Search</span><span style="left:22px;top:277.85px;font-size:11px;letter-spacing:0.023px;">Airport Transfers</span><span style="left:22px;top:294.85px;font-size:11px;letter-spacing:0.030px;">Agent</span><span style="left:22px;top:311.85px;font-size:11px;letter-spacing:-0.349px;">Finance</span><span style="left:22px;top:328.85px;font-size:11px;letter-spacing:-0.195px;">Utilities</span><span style="left:39px;top:345.85px;font-size:11px;letter-spacing:-0.325px;">Company</span><span style="left:39px;top:362.85px;font-size:11px;letter-spacing:-0.248px;">Faculties</span><span style="left:39px;top:379.85px;font-size:11px;letter-spacing:-0.310px;">Courses</span><span style="left:39px;top:396.85px;font-size:11px;letter-spacing:-0.442px;">Fees</span><span style="left:39px;top:413.85px;font-size:11px;transform:scaleX(0.9131);transform-origin:0 0;">Price Books</span><span style="left:39px;top:430.85px;font-size:11px;letter-spacing:-0.362px;">Suppliers</span><span style="left:39px;top:447.85px;font-size:11px;letter-spacing:-0.407px;">Users</span><span style="left:39px;top:464.85px;font-size:11px;letter-spacing:-0.381px;">User Roles</span><span style="left:39px;top:481.85px;font-size:11px;transform:scaleX(0.9069);transform-origin:0 0;">Rooms</span><span style="left:39px;top:498.85px;font-size:11px;letter-spacing:-0.086px;">Setup Configuration</span><span style="left:234px;top:117.69px;font-size:12.5px;letter-spacing:-0.184px;">Setup Configuration</span><span style="left:781.3px;top:116.69px;font-size:13.6px;transform:scaleX(0.8198);transform-origin:0 0;-webkit-text-stroke:0.45px #000;">?</span><span style="left:225.8px;top:146.84px;font-size:11px;letter-spacing:-0.010px;">Agent</span><span style="left:225.8px;top:163.84px;font-size:11px;letter-spacing:-0.254px;">Diary</span><span style="left:225.8px;top:180.84px;font-size:11px;letter-spacing:-0.406px;">Finance</span><span style="left:225.8px;top:197.84px;font-size:11px;letter-spacing:-0.327px;">Geographic</span><span style="left:225.8px;top:214.84px;font-size:11px;letter-spacing:-0.446px;">Groups</span><span style="left:225.8px;top:231.84px;font-size:11px;letter-spacing:-0.282px;">Language</span><span style="left:242.8px;top:248.84px;font-size:11px;letter-spacing:-0.354px;">Custom Fields</span><span style="left:242.8px;top:265.85px;font-size:11px;letter-spacing:-0.349px;">Levels</span><span style="left:242.8px;top:282.85px;font-size:11px;transform:scaleX(0.9095);transform-origin:0 0;">Sessions</span><span style="left:242.8px;top:299.85px;font-size:11px;letter-spacing:-0.002px;">Certificate Types</span><span style="left:242.8px;top:316.85px;font-size:11px;letter-spacing:-0.298px;">Results</span><span style="left:259.8px;top:333.85px;font-size:11px;letter-spacing:-0.377px;">Custom Fields</span><span style="left:259.8px;top:350.85px;font-size:11px;letter-spacing:-0.373px;">Class Results</span><span style="left:259.8px;top:367.85px;font-size:11px;letter-spacing:-0.154px;">Result Type</span><span style="left:259.8px;top:384.85px;font-size:11px;letter-spacing:-0.301px;">Result Groups</span><span style="left:259.8px;top:401.85px;font-size:11px;letter-spacing:-0.304px;">Result Codes</span><span style="left:225.8px;top:418.85px;font-size:11px;letter-spacing:0.127px;">Offer</span><span style="left:225.8px;top:435.85px;font-size:11px;letter-spacing:-0.209px;">Provider</span><span style="left:225.8px;top:452.85px;font-size:11px;letter-spacing:-0.003px;">Student</span><span style="left:225.8px;top:469.85px;font-size:11px;transform:scaleX(0.8376);transform-origin:0 0;">HE</span><span style="left:225.8px;top:486.85px;font-size:11px;letter-spacing:-0.113px;">Word Templates</span><span style="left:225.8px;top:503.84px;font-size:11px;letter-spacing:-0.402px;">SMS Templates</span><span style="left:430px;top:149.47px;font-size:18.6px;font-weight:bold;letter-spacing:0.530px;-webkit-text-stroke:0.35px #000;">Custom Fields</span><span style="left:448px;top:204.34px;font-size:11px;letter-spacing:-0.261px;">Custom Result 1</span><span style="left:544.6px;top:202.24px;font-size:11px;color:#fff;letter-spacing:-0.312px;">Reading</span><span style="left:724px;top:202.64px;font-size:11px;letter-spacing:-0.161px;">Active</span><span style="left:448px;top:227.34px;font-size:11px;letter-spacing:-0.261px;">Custom Result 2</span><span style="left:544.5px;top:225.24px;font-size:11px;letter-spacing:-0.119px;">Writing</span><span style="left:724px;top:225.64px;font-size:11px;letter-spacing:-0.161px;">Active</span><span style="left:448px;top:250.34px;font-size:11px;letter-spacing:-0.261px;">Custom Result 3</span><span style="left:544.5px;top:248.24px;font-size:11px;letter-spacing:-0.350px;">Comprehension</span><span style="left:724px;top:248.65px;font-size:11px;letter-spacing:-0.161px;">Active</span><span style="left:448px;top:273.35px;font-size:11px;letter-spacing:-0.261px;">Custom Result 4</span><span style="left:544.5px;top:271.25px;font-size:11px;transform:scaleX(0.9199);transform-origin:0 0;">Speaking</span><span style="left:724px;top:271.65px;font-size:11px;letter-spacing:-0.161px;">Active</span><span style="left:448px;top:296.35px;font-size:11px;letter-spacing:-0.261px;">Custom Result 5</span><span style="left:544.5px;top:294.25px;font-size:11px;letter-spacing:-0.349px;">Listenng</span><span style="left:724px;top:294.65px;font-size:11px;letter-spacing:-0.161px;">Active</span><span style="left:448px;top:319.35px;font-size:11px;letter-spacing:-0.261px;">Custom Result 6</span><span style="left:544.5px;top:317.25px;font-size:11px;letter-spacing:-0.196px;">Participation</span><span style="left:724px;top:317.65px;font-size:11px;letter-spacing:-0.161px;">Active</span><span style="left:448px;top:342.35px;font-size:11px;letter-spacing:-0.261px;">Custom Result 7</span><span style="left:544.5px;top:340.25px;font-size:11px;transform:scaleX(0.9017);transform-origin:0 0;">Final</span><span style="left:724px;top:340.65px;font-size:11px;letter-spacing:-0.161px;">Active</span><span style="left:448px;top:365.35px;font-size:11px;letter-spacing:-0.261px;">Custom Result 8</span><span style="left:544.5px;top:363.25px;font-size:11px;letter-spacing:-0.428px;">Level Up</span><span style="left:724px;top:363.65px;font-size:11px;letter-spacing:-0.161px;">Active</span><span style="left:448px;top:388.35px;font-size:11px;letter-spacing:-0.261px;">Custom Result 9</span><span style="left:545.6px;top:386.25px;font-size:11px;letter-spacing:0.194px;">&lt;not used&gt;</span><span style="left:724px;top:386.65px;font-size:11px;letter-spacing:-0.161px;">Active</span><span style="left:448px;top:411.35px;font-size:11px;letter-spacing:-0.259px;">Custom Result 10</span><span style="left:545.6px;top:409.25px;font-size:11px;letter-spacing:0.194px;">&lt;not used&gt;</span><span style="left:724px;top:409.65px;font-size:11px;letter-spacing:-0.161px;">Active</span><span style="left:448px;top:435.35px;font-size:11px;letter-spacing:-0.207px;">Custom Result 11</span><span style="left:545.6px;top:433.25px;font-size:11px;letter-spacing:0.194px;">&lt;not used&gt;</span><span style="left:724px;top:433.65px;font-size:11px;letter-spacing:-0.161px;">Active</span><span style="left:448px;top:458.35px;font-size:11px;letter-spacing:-0.259px;">Custom Result 12</span><span style="left:545.6px;top:456.25px;font-size:11px;letter-spacing:0.194px;">&lt;not used&gt;</span><span style="left:724px;top:456.65px;font-size:11px;letter-spacing:-0.161px;">Active</span><span style="left:448px;top:481.35px;font-size:11px;letter-spacing:-0.259px;">Custom Result 13</span><span style="left:545.6px;top:479.25px;font-size:11px;letter-spacing:0.194px;">&lt;not used&gt;</span><span style="left:724px;top:479.65px;font-size:11px;letter-spacing:-0.161px;">Active</span><span style="left:448px;top:504.34px;font-size:11px;letter-spacing:-0.259px;">Custom Result 14</span><span style="left:545.6px;top:502.25px;font-size:11px;letter-spacing:0.194px;">&lt;not used&gt;</span><span style="left:724px;top:502.65px;font-size:11px;letter-spacing:-0.161px;">Active</span><span style="left:448px;top:527.34px;font-size:11px;letter-spacing:-0.259px;">Custom Result 15</span><span style="left:545.6px;top:525.25px;font-size:11px;letter-spacing:0.194px;">&lt;not used&gt;</span><span style="left:724px;top:525.64px;font-size:11px;letter-spacing:-0.161px;">Active</span><span style="left:448px;top:550.34px;font-size:11px;letter-spacing:-0.259px;">Custom Result 16</span><span style="left:545.6px;top:548.25px;font-size:11px;letter-spacing:0.194px;">&lt;not used&gt;</span><span style="left:724px;top:548.64px;font-size:11px;letter-spacing:-0.161px;">Active</span><span style="left:448px;top:573.34px;font-size:11px;letter-spacing:-0.259px;">Custom Result 17</span><span style="left:545.6px;top:571.25px;font-size:11px;letter-spacing:0.194px;">&lt;not used&gt;</span><span style="left:724px;top:571.64px;font-size:11px;letter-spacing:-0.161px;">Active</span><span style="left:448px;top:596.34px;font-size:11px;letter-spacing:-0.259px;">Custom Result 18</span><span style="left:545.6px;top:594.25px;font-size:11px;letter-spacing:0.194px;">&lt;not used&gt;</span><span style="left:724px;top:594.64px;font-size:11px;letter-spacing:-0.161px;">Active</span><span style="left:448px;top:619.34px;font-size:11px;letter-spacing:-0.259px;">Custom Result 19</span><span style="left:545.6px;top:617.25px;font-size:11px;letter-spacing:0.194px;">&lt;not used&gt;</span><span style="left:724px;top:617.64px;font-size:11px;letter-spacing:-0.161px;">Active</span><span style="left:448px;top:642.34px;font-size:11px;letter-spacing:-0.259px;">Custom Result 20</span><span style="left:545.6px;top:640.25px;font-size:11px;letter-spacing:0.194px;">&lt;not used&gt;</span><span style="left:724px;top:640.64px;font-size:11px;letter-spacing:-0.161px;">Active</span><span style="left:722.6px;top:706.84px;font-size:11px;transform:scaleX(0.8613);transform-origin:0 0;">OK</span><span style="left:793.3px;top:706.84px;font-size:11px;letter-spacing:-0.375px;">Cancel</span></div></div></body></html>
